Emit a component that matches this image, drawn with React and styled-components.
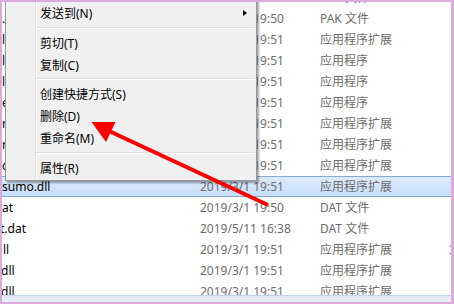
import React from "react";
import styled, { createGlobalStyle } from "styled-components";

const GlobalStyle = createGlobalStyle`
  html, body {
    margin: 0;
    padding: 0;
    background: #ffffff;
  }
  body {
    font-family: "Noto Sans", "Noto Sans CJK SC", sans-serif;
    font-size: 12px;
  }
`;

// pink screenshot frame round the whole capture
const Frame = styled.div`
  width: 454px;
  height: 304px;
  box-sizing: border-box;
  border-style: solid;
  border-color: #dcaadb;
  border-width: 2px 3px 2px 2px;
  display: flex;
  flex-direction: column;
  overflow: hidden;
`;

const Window = styled.div`
  flex: 1;
  position: relative;
  display: flex;
  flex-direction: column;
  background: #ffffff;
  overflow: hidden;
`;

const FileList = styled.div`
  flex: 1;
  overflow: hidden;
`;

const Rows = styled.div`
  margin-top: -15px;
`;

const Row = styled.div`
  display: grid;
  grid-template-columns: 198px 120px 128px 1fr;
  align-items: center;
  height: 21px;
  box-sizing: border-box;
  line-height: 19px;
  white-space: nowrap;
  border-top: 1px solid ${(p) => (p.$selected ? "#86a9d4" : "transparent")};
  border-bottom: 1px solid ${(p) => (p.$selected ? "#86a9d4" : "transparent")};
  background: ${(p) =>
    p.$selected ? "linear-gradient(#dcebfc, #c6ddf8)" : "transparent"};
`;

// list is scrolled sideways, so names show only their tail
const NameCell = styled.span`
  color: #000000;
  overflow: hidden;
  text-indent: ${(p) => p.$shift || 0}px;
`;

const MetaCell = styled.span`
  color: #6d6d6d;
  overflow: hidden;
`;

const SizeCell = styled.span`
  color: #6d6d6d;
  padding-left: 1px;
  overflow: visible;
`;

const StatusEdge = styled.div`
  height: 6px;
  flex: none;
  border-top: 1px solid #c5d4e6;
  background: linear-gradient(#dfe8f4, #e9eff8);
`;

// context menu lies over the list
const Menu = styled.div`
  position: absolute;
  left: 3px;
  top: -4px;
  width: 252px;
  box-sizing: border-box;
  padding: 3px 0 1px 0;
  border: 1px solid #979797;
  background-color: #f0f0f0;
  background-image: linear-gradient(
    to right,
    transparent 29px,
    #e2e3e3 29px,
    #e2e3e3 30px,
    #ffffff 30px,
    #ffffff 31px,
    transparent 31px
  );
  box-shadow: 2px 2px 2px rgba(0, 0, 0, 0.35);
  font-family: "Noto Sans", "Noto Sans CJK SC", sans-serif;
  font-size: 12px;
  color: #000000;
`;

const MenuItem = styled.div`
  display: flex;
  align-items: center;
  height: ${(p) => p.$h || 22}px;
  padding: 0 9px 0 34px;
  white-space: nowrap;
`;

const SubArrow = styled.span`
  margin-left: auto;
  width: 0;
  height: 0;
  border-left: 4px solid #000000;
  border-top: 3.5px solid transparent;
  border-bottom: 3.5px solid transparent;
`;

const Separator = styled.div`
  height: 8px;
  box-sizing: border-box;
  padding-top: 3px;
  margin: 0 1px 0 30px;
  &::before {
    content: "";
    display: block;
    border-top: 1px solid #e0e0e0;
    border-bottom: 1px solid #ffffff;
  }
`;

const Annotation = styled.svg`
  position: absolute;
  left: 0;
  top: 0;
  pointer-events: none;
`;

const files = [
  { name: "", date: "2019/3/1 19:50", type: "PAK 文件" },
  { name: ".", date: "2019/3/1 19:50", type: "PAK 文件" },
  { name: "l", date: "2019/3/1 19:51", type: "应用程序扩展" },
  { name: "l", date: "2019/3/1 19:51", type: "应用程序" },
  { name: "l", date: "2019/3/1 19:51", type: "应用程序" },
  { name: "e", date: "2019/3/1 19:51", type: "应用程序" },
  { name: "r", date: "2019/3/1 19:51", type: "应用程序扩展" },
  { name: "r", date: "2019/3/1 19:51", type: "应用程序扩展" },
  { name: "c", date: "2019/3/1 19:51", type: "应用程序扩展" },
  { name: "sumo.dll", date: "2019/3/1 19:51", type: "应用程序扩展", selected: true },
  { name: "at", date: "2019/3/1 19:50", type: "DAT 文件" },
  { name: "t.dat", date: "2019/5/11 16:38", type: "DAT 文件", shift: -2 },
  { name: "ll", date: "2019/3/1 19:51", type: "应用程序扩展", size: "3,296 KB", shift: 1 },
  { name: "dll", date: "2019/3/1 19:51", type: "应用程序扩展", shift: -1 },
  { name: "dll", date: "2019/3/1 19:51", type: "应用程序扩展", shift: -1 },
];

const menu = [
  { label: "发送到(N)", sub: true },
  { sep: true },
  { label: "剪切(T)" },
  { label: "复制(C)", h: 21 },
  { sep: true },
  { label: "创建快捷方式(S)" },
  { label: "删除(D)" },
  { label: "重命名(M)" },
  { sep: true },
  { label: "属性(R)" },
];

const App = () => {
  return (
    <>
      <GlobalStyle />
      <Frame>
        <Window>
          <FileList>
            <Rows>
              {files.map((f, i) => (
                <Row key={i} $selected={f.selected}>
                  <NameCell $shift={f.shift}>{f.name}</NameCell>
                  <MetaCell>{f.date}</MetaCell>
                  <MetaCell>{f.type}</MetaCell>
                  <SizeCell>{f.size || ""}</SizeCell>
                </Row>
              ))}
            </Rows>
          </FileList>
          <StatusEdge />

          <Menu>
            {menu.map((m, i) =>
              m.sep ? (
                <Separator key={i} />
              ) : (
                <MenuItem key={i} $h={m.h}>
                  {m.label}
                  {m.sub && <SubArrow />}
                </MenuItem>
              )
            )}
          </Menu>

          {/* red arrow drawn over the screenshot, page coordinates */}
          <Annotation width="449" height="300" viewBox="2 2 449 300">
            <line x1="109" y1="131" x2="268" y2="205" stroke="#fe0000" strokeWidth="4" />
            <polygon points="91.5,122 115.5,122 106,142" fill="#fe0000" />
          </Annotation>
        </Window>
      </Frame>
    </>
  );
};

export default App;
